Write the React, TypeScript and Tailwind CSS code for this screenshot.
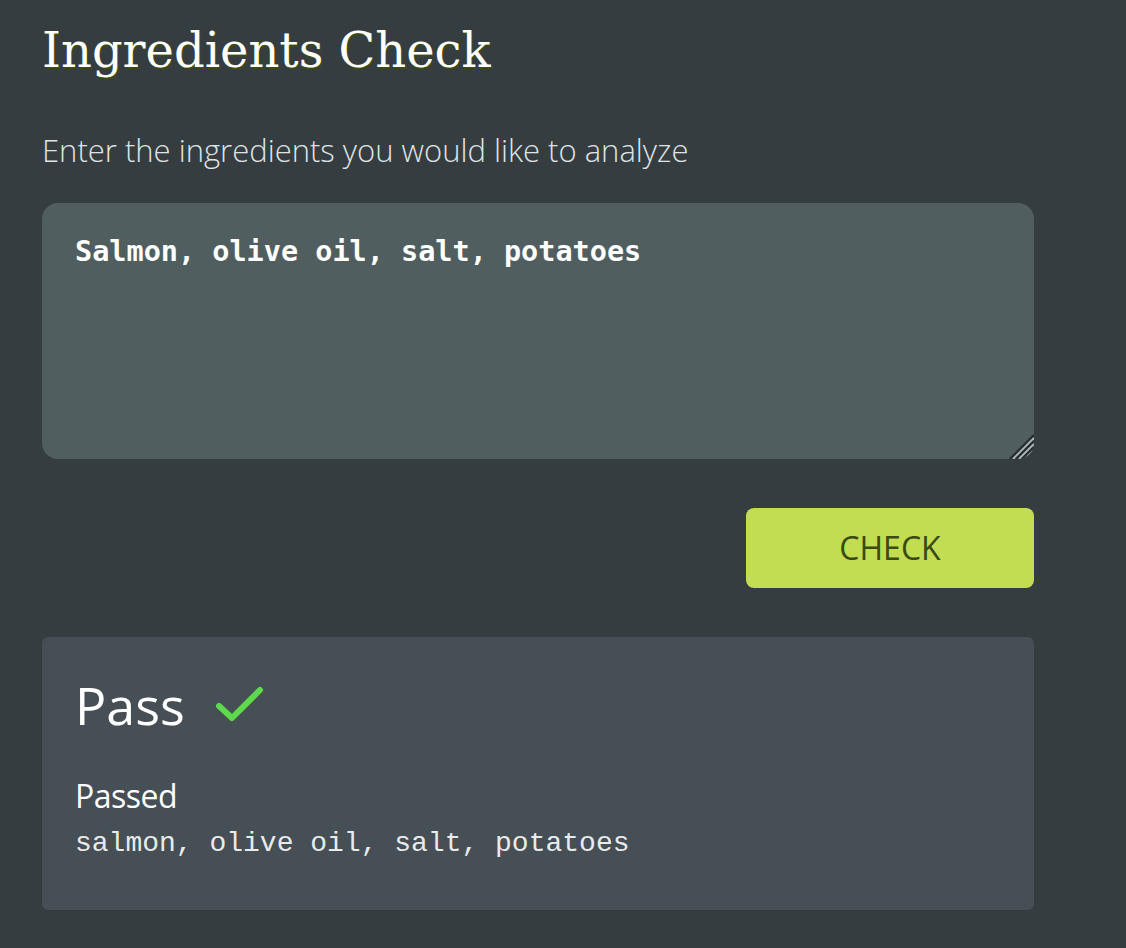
import { useState } from 'react';

function CheckIcon() {
  return (
    <svg width="50" height="38" viewBox="0 0 50 38" fill="none">
      <path
        d="M4 20 L17 32 L45 4"
        stroke="#5fd94c"
        strokeWidth="6"
        strokeLinecap="round"
        strokeLinejoin="round"
      />
    </svg>
  );
}

function ResizeGrip() {
  return (
    <svg className="absolute right-0 bottom-0 pointer-events-none" width="28" height="28" viewBox="0 0 28 28">
      <path d="M4 28 L28 4" stroke="#262c2e" strokeWidth="2.2" />
      <path d="M7 28 L28 7" stroke="#b0b8b9" strokeWidth="1.8" />
      <path d="M10 28 L28 10" stroke="#262c2e" strokeWidth="2.2" />
      <path d="M13 28 L28 13" stroke="#b0b8b9" strokeWidth="1.8" />
      <path d="M16 28 L28 16" stroke="#262c2e" strokeWidth="2.2" />
      <path d="M19 28 L28 19" stroke="#b0b8b9" strokeWidth="1.8" />
      <path d="M22 28 L28 22" stroke="#262c2e" strokeWidth="2.2" />
    </svg>
  );
}

export default function App() {
  const [text, setText] = useState('Salmon, olive oil, salt, potatoes');

  return (
    <div className="min-h-screen bg-[#363d41] pl-[42px] pt-[18px]">
      <div className="w-[992px]">
        <h1
          className="text-[48px] leading-[64px] text-white [text-shadow:1px_2px_0_#3c4a12]"
          style={{ fontFamily: '"DejaVu Serif", "Liberation Serif", serif', fontWeight: 300 }}
        >
          Ingredients Check
        </h1>

        <p
          className="mt-[48px] text-[31px] leading-[40px] font-light text-[#dfe3e4]"
          style={{ fontFamily: '"Open Sans", sans-serif' }}
        >
          Enter the ingredients you would like to analyze
        </p>

        <div className="relative mt-[33px] h-[256px] rounded-[16px] bg-[#505e5f] overflow-hidden">
          <textarea
            value={text}
            onChange={(e) => setText(e.target.value)}
            className="block w-full h-full resize-none bg-transparent px-[33px] pt-[31px] text-[28.5px] leading-[36px] font-bold text-white outline-none"
            style={{ fontFamily: '"DejaVu Sans Mono", monospace' }}
          />
          <ResizeGrip />
        </div>

        <div className="flex justify-end mt-[49px]">
          <button
            className="w-[288px] h-[80px] rounded-[8px] bg-[#c2dd52] text-[32px] text-[#3a4a12]"
            style={{ fontFamily: '"Open Sans", sans-serif' }}
          >
            CHECK
          </button>
        </div>

        <div className="mt-[49px] h-[273px] rounded-[6px] bg-[#464e56] px-[33px] pt-[33px]">
          <div className="flex items-center gap-[30px]">
            <span
              className="text-[52px] leading-[70px] text-white"
              style={{ fontFamily: '"Open Sans", sans-serif' }}
            >
              Pass
            </span>
            <CheckIcon />
          </div>
          <div
            className="mt-[39px] text-[32px] leading-[34px] text-white tracking-[-0.5px]"
            style={{ fontFamily: '"Open Sans", sans-serif' }}
          >
            Passed
          </div>
          <div
            className="mt-[13px] text-[28px] leading-[36px] text-[#e8ebec]"
            style={{ fontFamily: '"Liberation Mono", monospace' }}
          >
            salmon, olive oil, salt, potatoes
          </div>
        </div>
      </div>
    </div>
  );
}
